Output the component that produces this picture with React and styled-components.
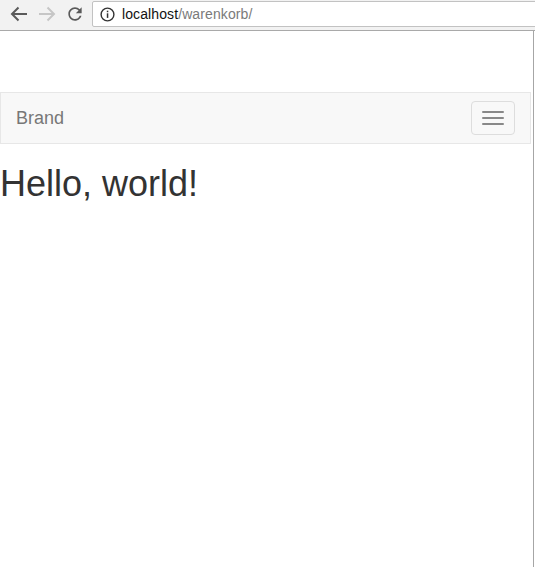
import React from "react";
import styled, { createGlobalStyle } from "styled-components";

const GlobalStyle = createGlobalStyle`
  html, body {
    margin: 0;
    padding: 0;
    background: #ffffff;
  }
  body {
    font-family: "Liberation Sans", Arial, sans-serif;
    overflow: hidden;
  }
  * { box-sizing: border-box; }
`;

const Window = styled.div`
  width: 535px;
  height: 567px;
  display: flex;
  flex-direction: column;
  overflow: hidden;
  background: #ffffff;
`;

const Toolbar = styled.div`
  height: 31px;
  flex: none;
  display: flex;
  align-items: flex-start;
  background: #f2f2f2;
  border-bottom: 1px solid #a9a9a9;
  padding-left: 5px;
`;

const NavButton = styled.button`
  width: 28px;
  height: 27px;
  padding: 0;
  margin: 0;
  border: 0;
  background: transparent;
  display: flex;
  align-items: center;
  justify-content: center;
  color: ${(p) => (p.$disabled ? "#c6c6c6" : "#5a5a5a")};
`;

const Omnibox = styled.div`
  margin-left: 3px;
  margin-top: 1px;
  height: 26px;
  flex: 1;
  margin-right: -20px;
  display: flex;
  align-items: center;
  gap: 7px;
  padding-left: 7px;
  background: #ffffff;
  border: 1px solid #c2c2c2;
  border-radius: 2px;
  font-family: "Liberation Sans", Arial, sans-serif;
  font-size: 14px;
  letter-spacing: 0.1px;
`;

const Host = styled.span`
  color: #111111;
`;

const Path = styled.span`
  color: #7a7a7a;
`;

const Url = styled.div`
  display: flex;
  line-height: 18px;
  margin-top: -1px;
`;

const Viewport = styled.div`
  flex: 1;
  display: flex;
`;

const Page = styled.div`
  width: 534px;
  padding-right: 2px;
  padding-top: 61px;
  border-right: 1px solid #a6a6a6;
  font-family: "Liberation Sans", Arial, sans-serif;
  font-size: 14px;
  line-height: 1.42857;
  color: #333333;
`;

const Navbar = styled.nav`
  min-height: 50px;
  margin-bottom: 20px;
  display: flex;
  justify-content: space-between;
  align-items: flex-start;
  background: #f8f8f8;
  border: 1px solid #e7e7e7;
`;

const Brand = styled.a`
  padding: 15px;
  font-size: 18px;
  line-height: 20px;
  height: 50px;
  color: #777777;
  text-decoration: none;
`;

const Toggle = styled.button`
  width: 44px;
  height: 34px;
  margin: 8px 15px 8px 0;
  padding: 9px 10px;
  display: flex;
  flex-direction: column;
  gap: 4px;
  background: transparent;
  border: 1px solid #dddddd;
  border-radius: 4px;
`;

const IconBar = styled.span`
  display: block;
  width: 22px;
  height: 2px;
  border-radius: 1px;
  background: #888888;
`;

const Heading = styled.h1`
  margin: 20px 0 10px;
  font-size: 36px;
  font-weight: 500;
  line-height: 1.1;
  color: #333333;
`;

const BackIcon = () => (
  <svg width="18" height="16" viewBox="0 0 18 16" fill="none">
    <path d="M2 8H17M8.5 1.5L2 8l6.5 6.5" stroke="currentColor" strokeWidth="2" />
  </svg>
);

const ForwardIcon = () => (
  <svg width="18" height="16" viewBox="0 0 18 16" fill="none">
    <path d="M16 8H1M9.5 1.5L16 8l-6.5 6.5" stroke="currentColor" strokeWidth="2" />
  </svg>
);

const ReloadIcon = () => (
  <svg width="20" height="20" viewBox="0 0 24 24" fill="currentColor">
    <path d="M17.65 6.35C16.2 4.9 14.21 4 12 4c-4.42 0-7.99 3.58-7.99 8s3.57 8 7.99 8c3.73 0 6.84-2.55 7.730-6h-2.08c-.82 2.33-3.04 4-5.65 4-3.31 0-6-2.69-6-6s2.69-6 6-6c1.66 0 3.14.69 4.22 1.78L13 11h7V4l-2.35 2.35z" />
  </svg>
);

const InfoIcon = () => (
  <svg width="15" height="15" viewBox="0 0 15 15" fill="none">
    <circle cx="7.5" cy="7.5" r="6.4" stroke="#333" strokeWidth="1.4" />
    <rect x="6.8" y="6.3" width="1.5" height="4.6" fill="#333" />
    <rect x="6.8" y="3.7" width="1.5" height="1.5" fill="#333" />
  </svg>
);

export default function App() {
  return (
    <>
      <GlobalStyle />
      <Window>
        <Toolbar>
          <NavButton aria-label="Back">
            <BackIcon />
          </NavButton>
          <NavButton $disabled aria-label="Forward">
            <ForwardIcon />
          </NavButton>
          <NavButton aria-label="Reload">
            <ReloadIcon />
          </NavButton>
          <Omnibox>
            <InfoIcon />
            <Url>
              <Host>localhost</Host>
              <Path>/warenkorb/</Path>
            </Url>
          </Omnibox>
        </Toolbar>
        <Viewport>
          <Page>
            <Navbar>
              <Brand href="#">Brand</Brand>
              <Toggle aria-label="Toggle navigation">
                <IconBar />
                <IconBar />
                <IconBar />
              </Toggle>
            </Navbar>
            <Heading>Hello, world!</Heading>
          </Page>
        </Viewport>
      </Window>
    </>
  );
}
